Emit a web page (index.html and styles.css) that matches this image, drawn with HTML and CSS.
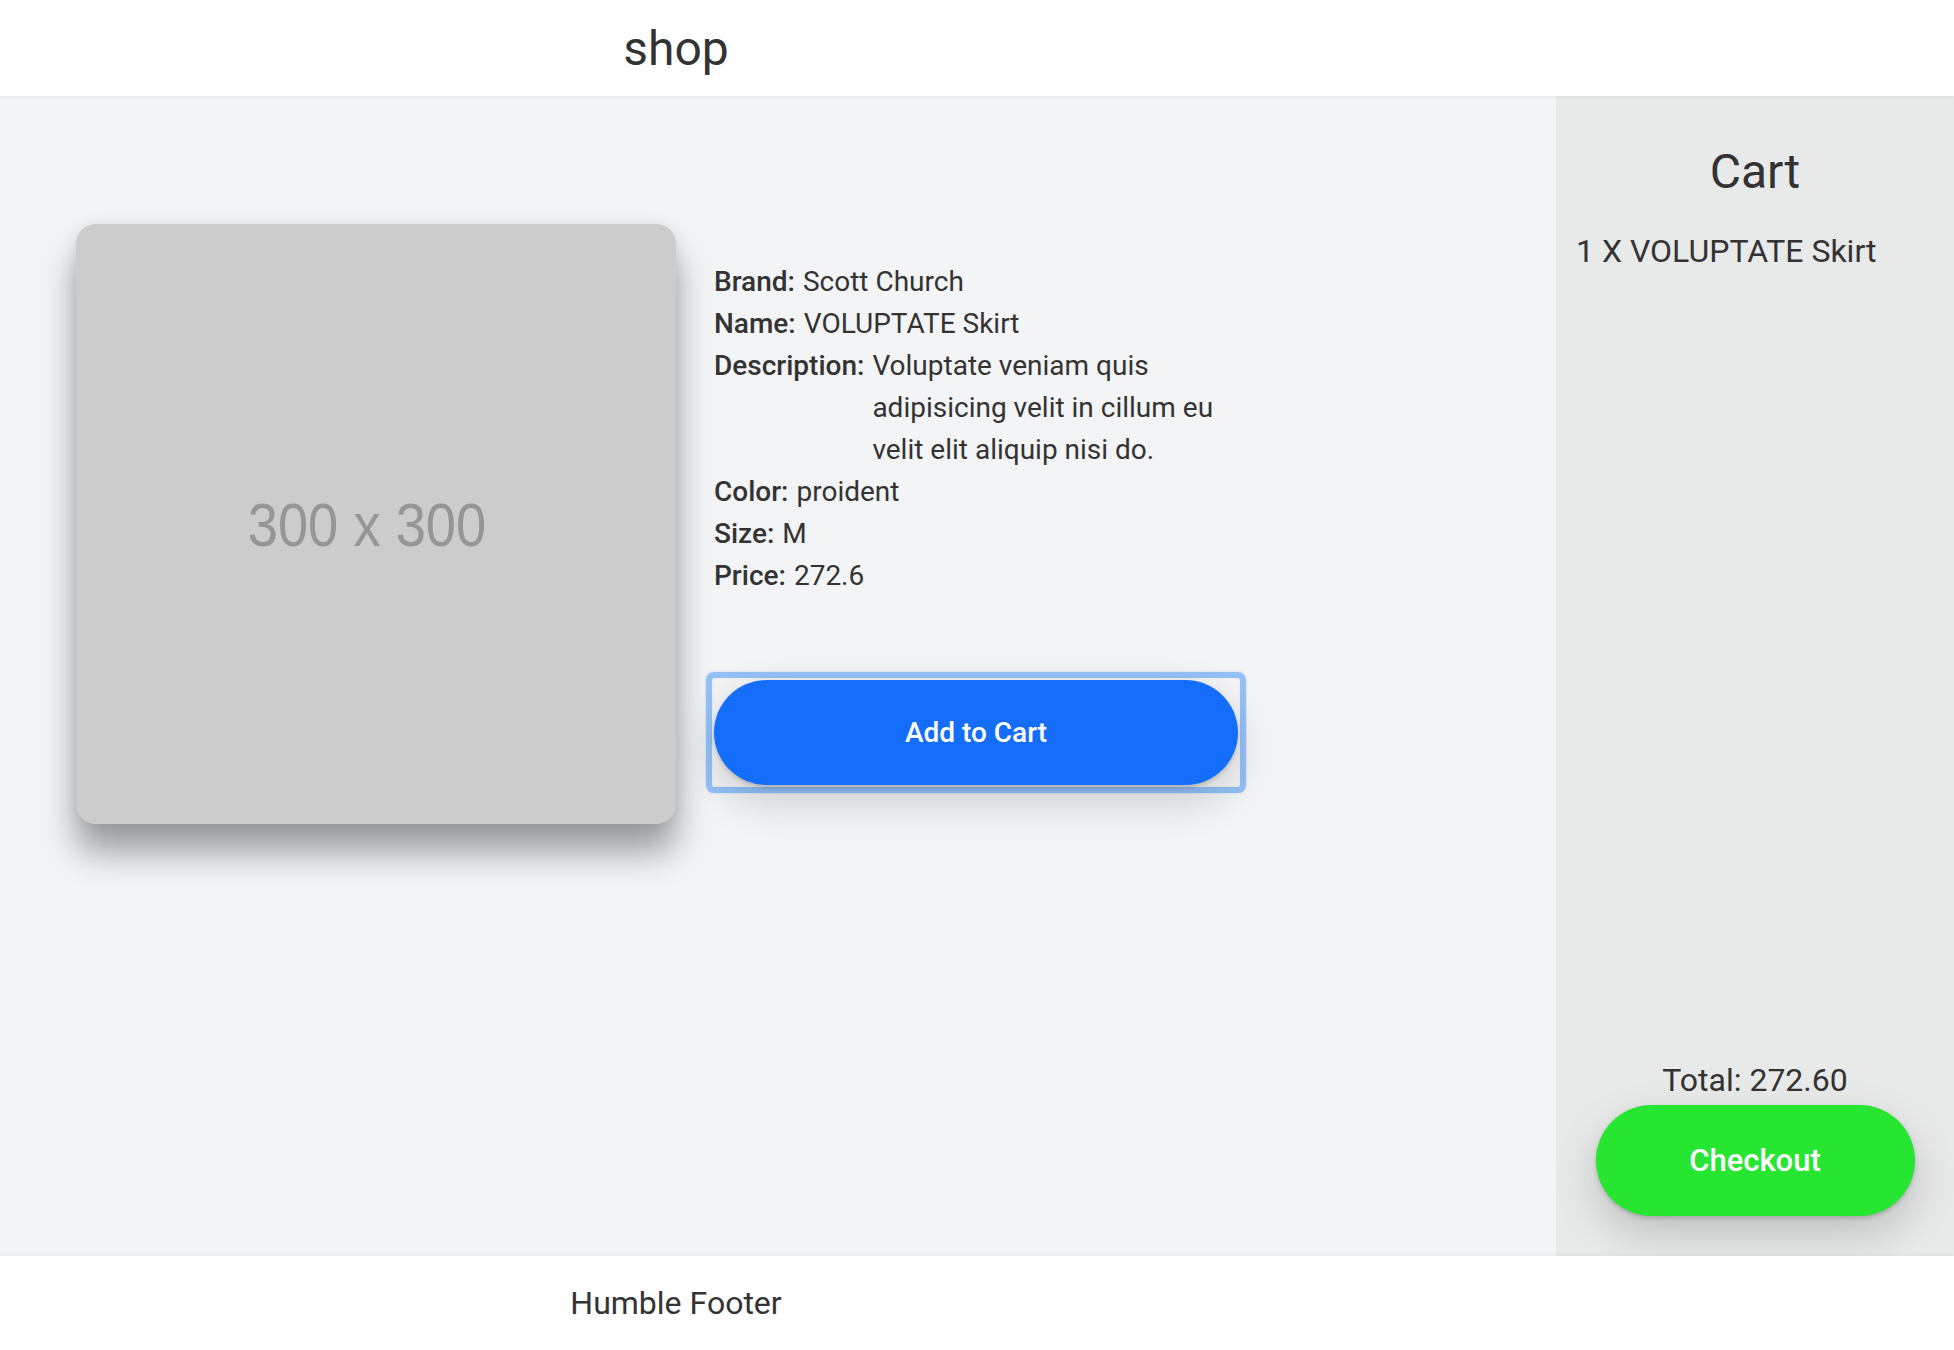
FILE: index.html
```html
<!DOCTYPE html>
<html lang="en">
<head>
<meta charset="utf-8">
<title>shop</title>
<link rel="stylesheet" href="styles.css">
</head>
<body>
<div class="app">
  <header class="header">
    <div class="header-inner">shop</div>
  </header>
  <main class="main">
    <section class="product">
      <div class="product-image">
        <span class="placeholder-text">300 x 300</span>
      </div>
      <div class="product-info">
        <dl class="details">
          <div class="row"><dt>Brand:</dt><dd>Scott Church</dd></div>
          <div class="row"><dt>Name:</dt><dd>VOLUPTATE Skirt</dd></div>
          <div class="row"><dt>Description:</dt><dd>Voluptate veniam quis adipisicing velit in cillum eu velit elit aliquip nisi do.</dd></div>
          <div class="row"><dt>Color:</dt><dd>proident</dd></div>
          <div class="row"><dt>Size:</dt><dd>M</dd></div>
          <div class="row"><dt>Price:</dt><dd>272.6</dd></div>
        </dl>
        <div class="btn-ring"><button class="btn btn-add">Add to Cart</button></div>
      </div>
    </section>
  </main>
  <aside class="cart">
    <h2 class="cart-title">Cart</h2>
    <ul class="cart-items">
      <li>1 X VOLUPTATE Skirt</li>
    </ul>
    <div class="cart-bottom">
      <div class="cart-total">Total: 272.60</div>
      <button class="btn btn-checkout">Checkout</button>
    </div>
  </aside>
  <footer class="footer">
    <div class="footer-inner">Humble Footer</div>
  </footer>
</div>
</body>
</html>
```

FILE: styles.css
```css
* { box-sizing: border-box; }

html, body {
  margin: 0;
  padding: 0;
  height: 100%;
}

body {
  font-family: Roboto, "Liberation Sans", Arial, sans-serif;
  color: #333333;
  background: #ffffff;
}

.app {
  display: grid;
  grid-template-columns: 1556px 1fr;
  grid-template-rows: 96px 1fr 94px;
  height: 100vh;
}

.header {
  grid-column: 1 / 3;
  grid-row: 1;
  background: #ffffff;
  display: flex;
  align-items: center;
  box-shadow: 0 1px 4px rgba(0, 0, 0, 0.06);
  position: relative;
  z-index: 1;
}

.header-inner {
  width: 1352px;
  text-align: center;
  font-size: 48px;
}

.main {
  grid-column: 1;
  grid-row: 2;
  background: #f3f4f6;
  padding: 128px 0 0 76px;
}

.product {
  display: flex;
  align-items: center;
  gap: 38px;
}

.product-image {
  width: 600px;
  height: 600px;
  flex: none;
  background: #cccccc;
  border-radius: 20px;
  display: flex;
  align-items: center;
  justify-content: center;
  box-shadow: 0 28px 34px rgba(0, 0, 0, 0.36), 0 0 16px rgba(0, 0, 0, 0.08);
}

.placeholder-text {
  font-family: "Liberation Sans", Arial, sans-serif;
  font-size: 61px;
  color: #969696;
  transform: scaleX(0.89);
  margin-left: -18px;
  margin-top: 2px;
}

.product-info {
  width: 524px;
  padding-top: 6px;
}

.details {
  margin: 0;
  font-size: 28px;
  line-height: 42px;
}

.row {
  display: flex;
  gap: 8px;
}

.row dt {
  font-weight: 500;
  flex: none;
}

.row dd {
  margin: 0;
}

.btn {
  font-family: Roboto, "Liberation Sans", Arial, sans-serif;
  font-weight: 500;
  color: #ffffff;
  border: none;
  border-radius: 999px;
  cursor: pointer;
}

.btn-ring {
  margin: 75px -8px 0;
  border: 6px solid rgba(125, 180, 248, 0.8);
  border-radius: 8px;
  padding: 2px;
  display: flex;
  box-shadow: 0 0 2px rgba(125, 180, 248, 0.6), inset 0 0 1px rgba(125, 180, 248, 0.6);
}

.btn-add {
  width: 100%;
  height: 105px;
  background: #146efb;
  font-size: 28px;
  box-shadow: 0 2px 4px rgba(0, 0, 0, 0.18), 0 16px 42px rgba(0, 0, 0, 0.16);
}

.cart {
  grid-column: 2;
  grid-row: 2;
  background: #e8e9e9;
  padding: 0 20px 40px;
  display: flex;
  flex-direction: column;
}

.cart-title {
  margin: 47px 0 0;
  text-align: center;
  font-size: 48px;
  font-weight: 400;
  line-height: normal;
}

.cart-items {
  list-style: none;
  margin: 32px 0 0;
  padding: 0;
  font-size: 32px;
  flex: 1;
}

.cart-bottom {
  display: flex;
  flex-direction: column;
  align-items: center;
  gap: 6px;
}

.cart-total {
  font-size: 32px;
}

.btn-checkout {
  width: 319px;
  height: 111px;
  background: #26e632;
  font-size: 31px;
  box-shadow: 0 2px 4px rgba(0, 0, 0, 0.18), 0 18px 44px rgba(0, 0, 0, 0.18);
}

.footer {
  grid-column: 1 / 3;
  grid-row: 3;
  background: #ffffff;
  display: flex;
  align-items: center;
  box-shadow: 0 -1px 4px rgba(0, 0, 0, 0.05);
}

.footer-inner {
  width: 1352px;
  text-align: center;
  font-size: 32px;
}
```
